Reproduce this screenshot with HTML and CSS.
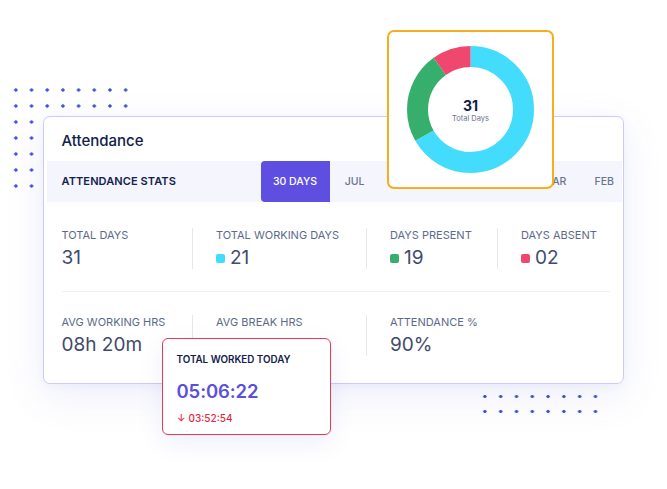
FILE: index.html
```html
<!DOCTYPE html>
<html lang="en">
<head>
<meta charset="utf-8">
<title>Attendance</title>
<link rel="stylesheet" href="styles.css">
</head>
<body>
<div class="stage">
  <div class="dots dots-top"></div>
  <div class="dots dots-bottom"></div>

  <section class="card">
    <h2 class="card-title">Attendance</h2>
    <div class="stats-bar">
      <span class="stats-label">ATTENDANCE STATS</span>
      <nav class="tabs">
        <span class="tab tab-active">30 DAYS</span>
        <span class="tab">JUL</span>
        <span class="tab">JUN</span>
        <span class="tab">MAY</span>
        <span class="tab">APR</span>
        <span class="tab">MAR</span>
        <span class="tab tab-last">FEB</span>
      </nav>
    </div>

    <div class="stat-row">
      <div class="stat stat-first">
        <div class="stat-label">TOTAL DAYS</div>
        <div class="stat-value">31</div>
      </div>
      <div class="stat">
        <div class="stat-label">TOTAL WORKING DAYS</div>
        <div class="stat-value"><i class="mark mark-cyan"></i>21</div>
      </div>
      <div class="stat">
        <div class="stat-label">DAYS PRESENT</div>
        <div class="stat-value"><i class="mark mark-green"></i>19</div>
      </div>
      <div class="stat">
        <div class="stat-label">DAYS ABSENT</div>
        <div class="stat-value"><i class="mark mark-red"></i>02</div>
      </div>
    </div>

    <hr class="rule">

    <div class="stat-row">
      <div class="stat stat-first">
        <div class="stat-label">AVG WORKING HRS</div>
        <div class="stat-value">08h 20m</div>
      </div>
      <div class="stat">
        <div class="stat-label">AVG BREAK HRS</div>
      </div>
      <div class="stat">
        <div class="stat-label">ATTENDANCE %</div>
        <div class="stat-value">90%</div>
      </div>
      <div class="stat stat-empty"></div>
    </div>
  </section>

  <div class="donut-card">
    <svg class="donut" width="127" height="127" viewBox="0 0 127 127">
      <g transform="rotate(-90 63.5 63.5)">
        <circle cx="63.5" cy="63.5" r="53" fill="none" stroke="#43dcfd" stroke-width="21"
          stroke-dasharray="222 333.01" stroke-dashoffset="0"/>
        <circle cx="63.5" cy="63.5" r="53" fill="none" stroke="#36ae6c" stroke-width="21"
          stroke-dasharray="77.7 333.01" stroke-dashoffset="-222"/>
        <circle cx="63.5" cy="63.5" r="53" fill="none" stroke="#f0476f" stroke-width="21"
          stroke-dasharray="33.31 333.01" stroke-dashoffset="-299.7"/>
      </g>
    </svg>
    <div class="donut-center">
      <div class="donut-num">31</div>
      <div class="donut-cap">Total Days</div>
    </div>
  </div>

  <div class="worked-card">
    <div class="worked-title">TOTAL WORKED TODAY</div>
    <div class="worked-time">05:06:22</div>
    <div class="worked-diff"><span class="arrow">&#8595;</span>03:52:54</div>
  </div>
</div>
</body>
</html>
```

FILE: styles.css
```css
* { box-sizing: border-box; }

html, body {
  margin: 0;
  padding: 0;
  background: #ffffff;
}

body {
  font-family: Inter, "Noto Sans", "Liberation Sans", sans-serif;
  color: #10204a;
}

.stage {
  position: relative;
  width: 667px;
  height: 489px;
  overflow: hidden;
  padding-top: 116px;
  padding-left: 43px;
}

.dots {
  position: absolute;
  background-image: radial-gradient(circle, #3d53d8 1.4px, rgba(61, 83, 216, 0) 1.9px);
}

.dots-top {
  left: 7.6px;
  top: 82px;
  width: 125.6px;
  height: 112px;
  background-size: 15.7px 16px;
}

.dots-bottom {
  left: 477px;
  top: 388.5px;
  width: 126.4px;
  height: 30px;
  background-size: 15.8px 15px;
}

.card {
  position: relative;
  z-index: 1;
  width: 581px;
  height: 268px;
  background: #ffffff;
  border: 1.5px solid #cfcaf7;
  border-radius: 7px;
  padding-top: 13.5px;
  box-shadow: 0 12px 40px rgba(88, 98, 220, 0.10), 0 2px 10px rgba(88, 98, 220, 0.06);
}

.card-title {
  margin: 0 0 10px 17.5px;
  font-size: 15px;
  line-height: 20px;
  font-weight: 500;
  color: #10204a;
}

.stats-bar {
  display: flex;
  align-items: stretch;
  height: 41px;
  margin: 0 1.5px 0 2.5px;
  background: #f4f5fd;
}

.stats-label {
  flex: 1;
  display: flex;
  align-items: center;
  padding-left: 15px;
  font-size: 11px;
  font-weight: 600;
  color: #13224d;
  letter-spacing: 0.1px;
}

.tabs {
  display: flex;
}

.tab {
  display: flex;
  align-items: center;
  justify-content: center;
  width: 50px;
  font-size: 10.5px;
  font-weight: 500;
  color: #6b7390;
}

.tab-active {
  width: 69px;
  background: #5f4fe0;
  color: #ffffff;
  border-radius: 4px 0 0 4px;
}

.tab-last {
  width: 42px;
  justify-content: flex-start;
  padding-left: 15px;
}

.stat-row {
  display: grid;
  grid-template-columns: 130px 174px 131px 1fr;
  margin: 26.5px 13px 0 17.5px;
}

.rule {
  margin: 22px 13px 0 17.5px;
  border: 0;
  border-top: 1px solid #eceef3;
  height: 0;
}

.rule + .stat-row {
  margin-top: 23px;
}

.stat {
  height: 41px;
  border-left: 1px solid #e6e8ee;
  padding-left: 23.5px;
}

.stat-first {
  border-left: 0;
  padding-left: 0;
}

.stat-empty {
  border-left: 0;
}

.stat-label {
  font-size: 11px;
  line-height: 15px;
  color: #5c6a8a;
  white-space: nowrap;
}

.stat-value {
  display: flex;
  align-items: center;
  margin-top: 3px;
  font-size: 19px;
  line-height: 24px;
  color: #3f4a6c;
  white-space: nowrap;
}

.mark {
  display: inline-block;
  width: 9px;
  height: 9px;
  border-radius: 2px;
  margin-right: 5px;
  margin-top: 1px;
}

.mark-cyan { background: #43dcfd; }
.mark-green { background: #36ae6c; }
.mark-red { background: #f0476f; }

.donut-card {
  position: absolute;
  z-index: 2;
  left: 387px;
  top: 30px;
  width: 167px;
  height: 159px;
  background: #ffffff;
  border: 2px solid #f7ae1b;
  border-radius: 7px;
  display: flex;
  align-items: center;
  justify-content: center;
}

.donut {
  display: block;
}

.donut-center {
  position: absolute;
  left: 0;
  right: 0;
  top: 64.5px;
  text-align: center;
}

.donut-num {
  font-size: 14px;
  line-height: 17px;
  font-weight: 700;
  color: #10204a;
}

.donut-cap {
  font-size: 7.5px;
  line-height: 10px;
  color: #6b7390;
}

.worked-card {
  position: absolute;
  z-index: 3;
  left: 162px;
  top: 338px;
  width: 169px;
  height: 97px;
  background: #ffffff;
  border: 1.5px solid #e63a52;
  border-radius: 6px;
  padding: 14px 0 0 13.5px;
  box-shadow: 0 8px 24px rgba(88, 98, 220, 0.10);
}

.worked-title {
  font-size: 9.8px;
  line-height: 13px;
  font-weight: 600;
  color: #10204a;
}

.worked-time {
  margin-top: 13px;
  font-size: 18.5px;
  line-height: 24px;
  font-weight: 600;
  letter-spacing: -0.1px;
  color: #5b4fdc;
}

.worked-diff {
  margin-top: 9px;
  font-size: 10px;
  line-height: 13px;
  font-weight: 500;
  color: #e4283f;
  display: flex;
  align-items: center;
}

.arrow {
  font-size: 10px;
  margin-right: 3px;
  margin-left: 0.5px;
}
```
